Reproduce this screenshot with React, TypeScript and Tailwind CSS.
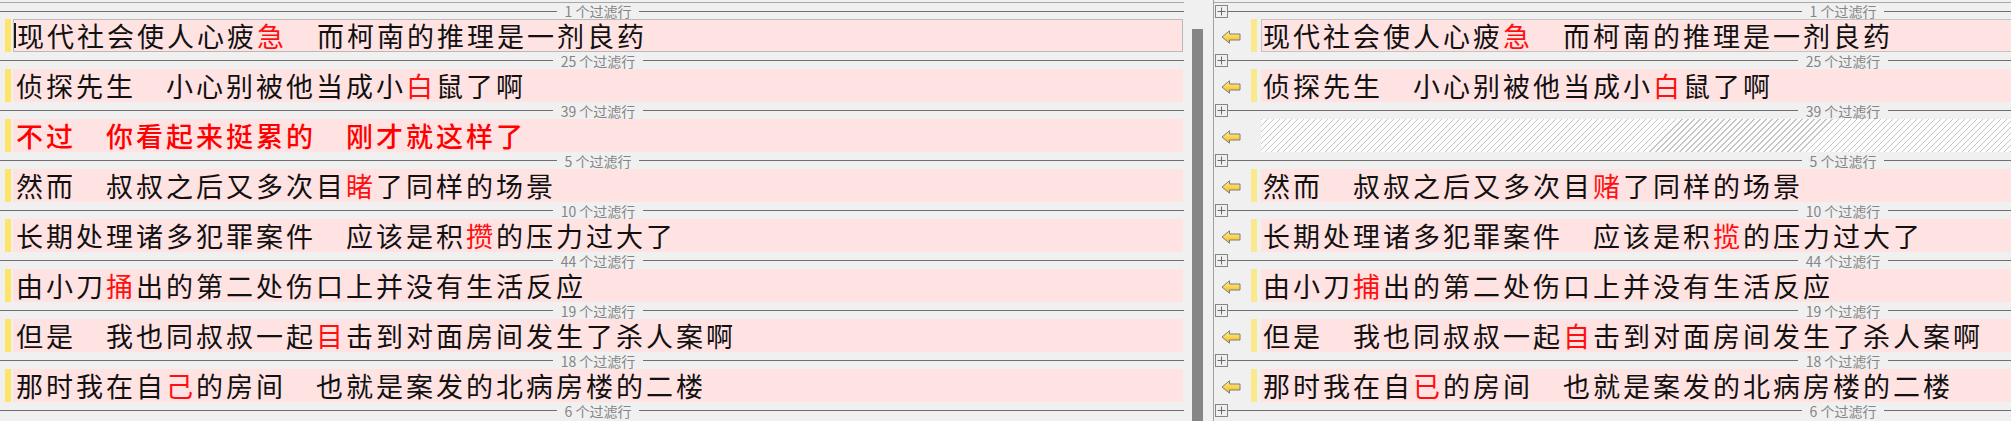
import type React from "react"

type Line = { pre: string; hi?: string; post?: string; allRed?: boolean; hatched?: boolean }

type Pair = { count: string; left: Line; right: Line }

const PAIRS: Pair[] = [
  {
    count: "1",
    left: { pre: "现代社会使人心疲", hi: "急", post: "　而柯南的推理是一剂良药" },
    right: { pre: "现代社会使人心疲", hi: "急", post: "　而柯南的推理是一剂良药" },
  },
  {
    count: "25",
    left: { pre: "侦探先生　小心别被他当成小", hi: "白", post: "鼠了啊" },
    right: { pre: "侦探先生　小心别被他当成小", hi: "白", post: "鼠了啊" },
  },
  {
    count: "39",
    left: { pre: "不过　你看起来挺累的　刚才就这样了", allRed: true },
    right: { pre: "", hatched: true },
  },
  {
    count: "5",
    left: { pre: "然而　叔叔之后又多次目", hi: "睹", post: "了同样的场景" },
    right: { pre: "然而　叔叔之后又多次目", hi: "赌", post: "了同样的场景" },
  },
  {
    count: "10",
    left: { pre: "长期处理诸多犯罪案件　应该是积", hi: "攒", post: "的压力过大了" },
    right: { pre: "长期处理诸多犯罪案件　应该是积", hi: "揽", post: "的压力过大了" },
  },
  {
    count: "44",
    left: { pre: "由小刀", hi: "捅", post: "出的第二处伤口上并没有生活反应" },
    right: { pre: "由小刀", hi: "捕", post: "出的第二处伤口上并没有生活反应" },
  },
  {
    count: "19",
    left: { pre: "但是　我也同叔叔一起", hi: "目", post: "击到对面房间发生了杀人案啊" },
    right: { pre: "但是　我也同叔叔一起", hi: "自", post: "击到对面房间发生了杀人案啊" },
  },
  {
    count: "18",
    left: { pre: "那时我在自", hi: "己", post: "的房间　也就是案发的北病房楼的二楼" },
    right: { pre: "那时我在自", hi: "已", post: "的房间　也就是案发的北病房楼的二楼" },
  },
]

const TEXT_FONT = "font-['Noto_Sans_CJK_SC',sans-serif] text-[27px] leading-[27px] tracking-[3px]"

const Label = ({ count }: { count: string }) => (
  <span className="px-[8px] font-['Noto_Sans_CJK_SC',sans-serif] text-[14px] leading-[14px] text-[#858585] whitespace-nowrap">
    {count} 个过滤行
  </span>
)

const LeftBand = ({ count, first }: { count: string; first?: boolean }) => (
  <div className={`flex items-center ${first ? "h-[16px]" : "h-[17px]"}`}>
    <div className="h-px flex-[1_1_12px] bg-[#6f6f6f]" />
    <Label count={count} />
    <div className="h-px flex-[1_1_0px] bg-[#6f6f6f]" />
  </div>
)

const RightBand = ({ count, first }: { count: string; first?: boolean }) => (
  <div className={`flex items-center ${first ? "h-[16px]" : "h-[17px]"}`}>
    <div className="ml-px flex h-[13px] w-[13px] items-center justify-center border border-[#858585] bg-[#f0f0f0]">
      <svg width="9" height="9" viewBox="0 0 9 9">
        <path d="M0.5 4.5H8.5M4.5 0.5V8.5" stroke="#6a6a6a" strokeWidth="1" />
      </svg>
    </div>
    <div className="h-px flex-1 bg-[#6f6f6f]" />
    <Label count={count} />
    <div className="h-px flex-1 bg-[#6f6f6f]" />
  </div>
)

const Text = ({ line }: { line: Line }) => {
  if (line.allRed) {
    return <span className={`${TEXT_FONT} whitespace-pre font-medium text-[#ff0000]`}>{line.pre}</span>
  }
  return (
    <span className={`${TEXT_FONT} whitespace-pre text-[#111111]`}>
      {line.pre}
      <span className="text-[#ff1010]">{line.hi}</span>
      {line.post}
    </span>
  )
}

const Arrow = () => (
  <svg width="20" height="14" viewBox="0 0 20 14">
    <defs>
      <linearGradient id="arrowFill" x1="0" y1="0" x2="0" y2="1">
        <stop offset="0" stopColor="#fff09a" />
        <stop offset="0.5" stopColor="#fbd54e" />
        <stop offset="1" stopColor="#eeb52a" />
      </linearGradient>
    </defs>
    <path
      d="M1 7 L8.5 0.8 V4 H19 V10 H8.5 V13.2 Z"
      fill="url(#arrowFill)"
      stroke="#7c7c7c"
      strokeWidth="1"
      strokeLinejoin="round"
    />
  </svg>
)

const LeftRow = ({ line, current }: { line: Line; current?: boolean }) => (
  <div className="flex h-[33px] items-stretch pl-[5px]">
    <div className="w-[6px] bg-[#ffe46a]" />
    <div
      className={`ml-[2px] mr-px flex flex-1 items-center bg-[#ffe3e3] ${
        current ? "border border-[#b9b9b9]" : "pl-[3px]"
      }`}
    >
      {current && <div className="mr-px h-[25px] w-[2px] bg-[#1a1a1a]" />}
      <Text line={line} />
    </div>
  </div>
)

const RightRow = ({ line, current }: { line: Line; current?: boolean }) => (
  <div className="flex h-[33px] items-stretch">
    <div className="flex w-[47px] items-center">
      <div className="ml-[7px] mt-[2px] flex">
        <Arrow />
      </div>
      <div className="ml-auto mr-[4px] h-full w-[6px]">
        {!line.hatched && <div className="h-full w-full bg-[#fbe88a]" />}
      </div>
    </div>
    {line.hatched ? (
      <div className="flex-1 bg-[repeating-linear-gradient(135deg,#c6c6c6_0px,#c6c6c6_0.9px,#fdfdfd_0.9px,#fdfdfd_4.25px)]" />
    ) : (
      <div
        className={`flex flex-1 items-center bg-[#ffe3e3] ${
          current ? "border border-[#c3c3c3] pl-px" : "pl-[2px]"
        }`}
      >
        <Text line={line} />
      </div>
    )}
  </div>
)

export default function App(): React.ReactElement {
  return (
    <div className="flex h-[421px] w-[2011px] overflow-hidden bg-[#f0f0f0]">
      {/* left pane */}
      <div className="flex w-[1184px] flex-col pt-[2px]">
        <div className="h-px bg-[#a8a8a8]" />
        {PAIRS.map((p, i) => (
          <div key={i} className="flex flex-col">
            <LeftBand count={p.count} first={i === 0} />
            <LeftRow line={p.left} current={i === 0} />
          </div>
        ))}
        <LeftBand count="6" />
      </div>

      {/* scrollbar */}
      <div className="flex w-[29px] flex-col pl-[8px] pt-[29px]">
        <div className="w-[11px] flex-1 bg-[#858585]" />
      </div>
      <div className="w-px bg-[#a0a0a0]" />

      {/* right pane */}
      <div className="flex-1 overflow-hidden">
        <div className="flex w-[1244px] flex-col pt-[2px]">
          <div className="h-px bg-[#a8a8a8]" />
          {PAIRS.map((p, i) => (
            <div key={i} className="flex flex-col">
              <RightBand count={p.count} first={i === 0} />
              <RightRow line={p.right} current={i === 0} />
            </div>
          ))}
          <RightBand count="6" />
        </div>
      </div>
    </div>
  )
}
